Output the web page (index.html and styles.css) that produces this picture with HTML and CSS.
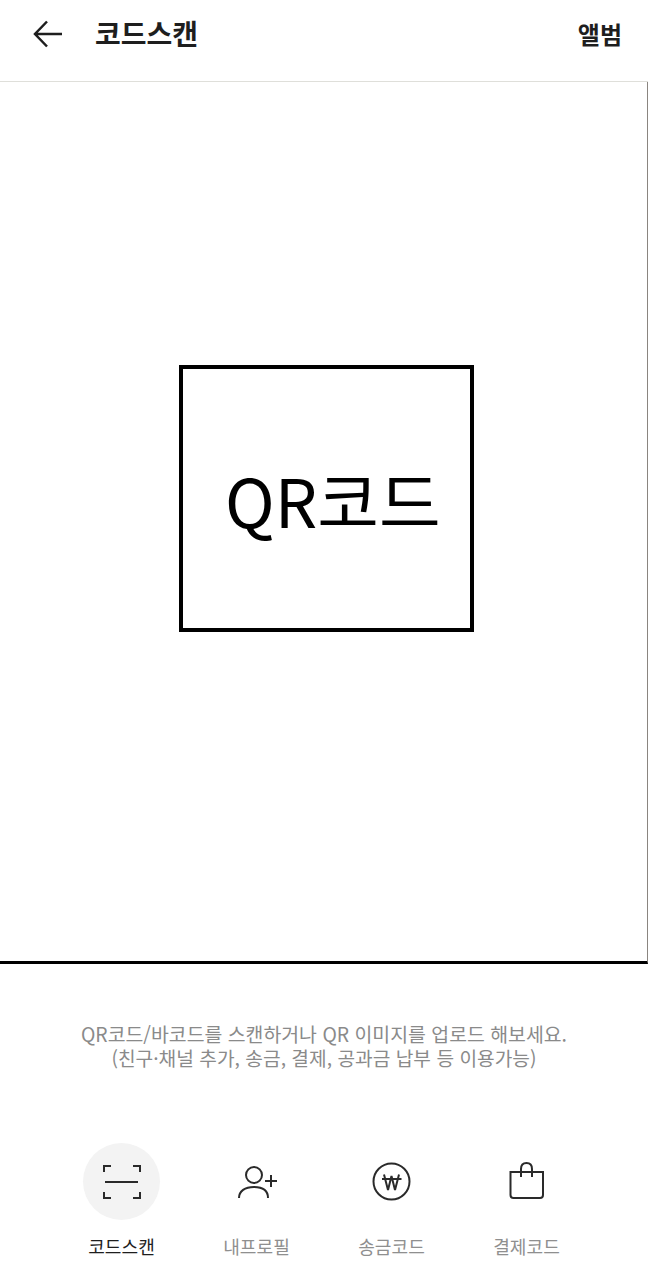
FILE: index.html
```html
<!DOCTYPE html>
<html lang="ko">
<head>
    <meta charset="UTF-8">
    <meta name="viewport" content="width=device-width, initial-scale=1.0">
    <title>코드스캔</title>
    <link rel="stylesheet" href="styles.css">
</head>
<body>
<header class="top-bar">
    <div class="top-left">
        <svg class="back-icon" width="30" height="28" viewBox="0 0 30 28">
            <path d="M29 14H2M14 1.500L2 14l12 12.500" fill="none" stroke="#1e1e1e" stroke-width="2.500"/>
        </svg>
        <h1 class="title">코드스캔</h1>
    </div>
    <span class="album">앨범</span>
</header>

<main class="scan-area">
    <div class="qr-box">QR코드</div>
</main>

<p class="guide">QR코드/바코드를 스캔하거나 QR 이미지를 업로드 해보세요.<br><span class="guide-sub">(친구·채널 추가, 송금, 결제, 공과금 납부 등 이용가능)</span></p>

<nav class="tabs">
    <div class="tab active">
        <div class="tab-icon">
            <svg viewBox="0 0 77 77">
                <path d="M21 29V23H28M50 23H57V29M21 49V55H28M50 55H57V49M22 39H55"/>
            </svg>
        </div>
        <span>코드스캔</span>
    </div>
    <div class="tab">
        <div class="tab-icon">
            <svg viewBox="0 0 77 77">
                <circle cx="36" cy="32" r="8"/>
                <path d="M21 55C21 48 27 44 36 44S50 48 50 55M47 38H59M53 32V44"/>
            </svg>
        </div>
        <span>내프로필</span>
    </div>
    <div class="tab">
        <div class="tab-icon">
            <svg viewBox="0 0 77 77">
                <circle cx="38.500" cy="38.500" r="18"/>
                <path d="M29 36H48.500M31 31.500L35 47L38.500 33L42 47L46 31.500"/>
            </svg>
        </div>
        <span>송금코드</span>
    </div>
    <div class="tab">
        <div class="tab-icon">
            <svg viewBox="0 0 77 77">
                <path d="M22.500 29H55V52Q55 55 52 55H25.500Q22.500 55 22.500 52ZM33 34V26C33 22 35 20 38.500 20S44 22 44 26V34"/>
            </svg>
        </div>
        <span>결제코드</span>
    </div>
</nav>
</body>
</html>
```

FILE: styles.css
```css
* {
    box-sizing: border-box;
}
body {
    margin: 0;
    height: 1288px;
    background: #fff;
    font-family: "Noto Sans CJK KR", "Noto Sans", sans-serif;
    color: #1e1e1e;
}
.top-bar {
    height: 82px;
    padding: 0 26px 14px 33px;
    display: flex;
    justify-content: space-between;
    align-items: center;
    border-bottom: 1px solid #dfdfda;
}
.top-left {
    display: flex;
    align-items: center;
    gap: 32px;
}
.title {
    margin: 0 0 2px;
    font-size: 28px;
    font-weight: 700;
    line-height: 36px;
}
.album {
    font-size: 24px;
    font-weight: 700;
}
.scan-area {
    height: 882px;
    padding: 283px 0 0 179px;
    border-bottom: 3px solid #000;
    border-right: 1px solid #8a8580;
}
.qr-box {
    width: 295px;
    height: 267px;
    border: 4px solid #000;
    padding-top: 85px;
    padding-left: 42px;
    font-size: 67px;
    line-height: 90px;
    color: #000;
    white-space: nowrap;
}
.guide {
    margin: 58px 0 0;
    text-align: center;
    font-size: 19.400px;
    line-height: 24px;
    color: #8a8a8a;
}
.guide-sub {
    font-size: 19.200px;
}
.tabs {
    margin-top: 73px;
    padding-left: 54px;
    display: flex;
}
.tab {
    width: 135px;
    display: flex;
    flex-direction: column;
    align-items: center;
    font-size: 18.100px;
    line-height: 24px;
    color: #8f8f8f;
}
.tab-icon {
    width: 77px;
    height: 77px;
    margin-bottom: 14px;
    border-radius: 50%;
}
.tab-icon svg {
    display: block;
    fill: none;
    stroke: #2a2a2a;
    stroke-width: 2;
}
.tab.active {
    color: #1e1e1e;
}
.tab.active .tab-icon {
    background: #f3f3f3;
}
```
